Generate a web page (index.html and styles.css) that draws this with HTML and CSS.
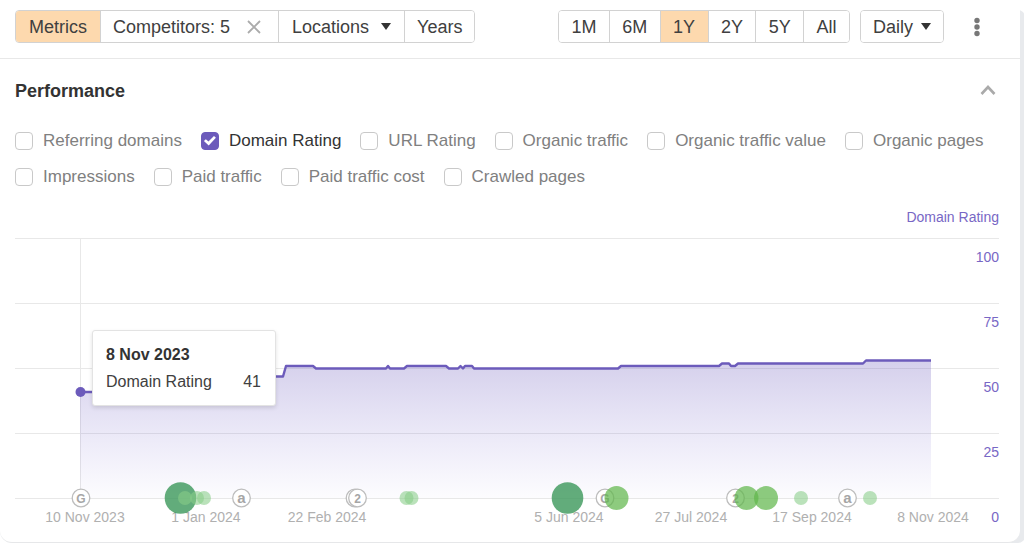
FILE: index.html
```html
<!DOCTYPE html>
<html lang="en">
<head>
<meta charset="utf-8">
<title>Performance</title>
<link rel="stylesheet" href="styles.css">
</head>
<body>
<main class="card">
  <header class="toolbar">
    <div class="group">
      <button class="seg seg-active" type="button">Metrics</button>
      <div class="seg seg-split">
        <button class="plain" type="button">Competitors: 5</button>
        <button class="plain close" type="button" aria-label="Clear competitors">
          <svg width="14" height="14" viewBox="0 0 14 14"><path d="M1 1L13 13M13 1L1 13" stroke="#ababab" stroke-width="1.8" fill="none"/></svg>
        </button>
      </div>
      <div class="seg seg-select locations">
        <select aria-label="Locations"><option>Locations</option></select>
        <svg class="caret" width="10" height="7" viewBox="0 0 10 7"><path d="M0 0H10L5 7Z" fill="#333"/></svg>
      </div>
      <button class="seg years" type="button">Years</button>
    </div>
    <div class="right">
      <div class="group ranges">
        <button class="seg" type="button">1M</button>
        <button class="seg" type="button">6M</button>
        <button class="seg seg-active" type="button">1Y</button>
        <button class="seg" type="button">2Y</button>
        <button class="seg" type="button">5Y</button>
        <button class="seg" type="button">All</button>
      </div>
      <div class="group">
        <div class="seg seg-select daily">
          <select aria-label="Interval"><option>Daily</option></select>
          <svg class="caret" width="10" height="7" viewBox="0 0 10 7"><path d="M0 0H10L5 7Z" fill="#333"/></svg>
        </div>
      </div>
      <button class="plain more" type="button" aria-label="More options">
        <svg width="6" height="20" viewBox="0 0 6 20" fill="#777"><circle cx="3" cy="3.5" r="2.7"/><circle cx="3" cy="10" r="2.7"/><circle cx="3" cy="16.500" r="2.7"/></svg>
      </button>
    </div>
  </header>

  <section class="performance">
    <div class="heading">
      <h2>Performance</h2>
      <button class="plain" type="button" aria-label="Collapse">
        <svg width="16" height="14" viewBox="0 0 16 14"><path d="M1.500 10L8 3L14.500 10" stroke="#aaa" stroke-width="2.600" fill="none"/></svg>
      </button>
    </div>

    <div class="checks">
      <label><input type="checkbox">Referring domains</label>
      <label><input type="checkbox" checked>Domain Rating</label>
      <label><input type="checkbox">URL Rating</label>
      <label><input type="checkbox">Organic traffic</label>
      <label><input type="checkbox">Organic traffic value</label>
      <label><input type="checkbox">Organic pages</label>
      <label><input type="checkbox">Impressions</label>
      <label><input type="checkbox">Paid traffic</label>
      <label><input type="checkbox">Paid traffic cost</label>
      <label><input type="checkbox">Crawled pages</label>
    </div>

    <div class="chart">
      <svg class="plot" viewBox="15 205 984 325" role="img" aria-label="Domain Rating over time">
        <defs>
          <linearGradient id="area" gradientUnits="userSpaceOnUse" x1="0" y1="360" x2="0" y2="498">
            <stop offset="0" stop-color="#6c5bbb" stop-opacity=".29"/>
            <stop offset="1" stop-color="#7f70d8" stop-opacity=".02"/>
          </linearGradient>
        </defs>
        <path class="grid" d="M15 238.500H999M15 303.500H999M15 368.500H999M15 433.500H999M15 498.500H999M80.500 238V498"/>
        <path fill="url(#area)" d="M80 392H92V377H283L286 366H313L316 368.500H386L388 366L390 368.500H404L407 366H446L449 368.500H458L460.500 366L463 368.500L465 366H472L474 368.500H618L621 366H719L722 363.500H729L731 366H735L738 363.500H863L866 360.500H931V498H80Z"/>
        <path class="line" d="M80 392H100M270 376.500H283L286 366H313L316 368.500H386L388 366L390 368.500H404L407 366H446L449 368.500H458L460.500 366L463 368.500L465 366H472L474 368.500H618L621 366H719L722 363.500H729L731 366H735L738 363.500H863L866 360.500H931"/>
        <circle cx="80.500" cy="392" r="5" fill="#6c5bbb"/>

        <g class="scale" text-anchor="end">
          <text x="999" y="222">Domain Rating</text>
          <text x="999" y="262">100</text>
          <text x="999" y="327">75</text>
          <text x="999" y="392">50</text>
          <text x="999" y="457">25</text>
          <text x="999" y="522">0</text>
        </g>
        <g class="dates" text-anchor="middle">
          <text x="85" y="522">10 Nov 2023</text>
          <text x="206" y="522">1 Jan 2024</text>
          <text x="327" y="522">22 Feb 2024</text>
          <text x="569" y="522">5 Jun 2024</text>
          <text x="691" y="522">27 Jul 2024</text>
          <text x="812" y="522">17 Sep 2024</text>
          <text x="933" y="522">8 Nov 2024</text>
        </g>

        <g class="badge" text-anchor="middle">
          <circle cx="81" cy="498" r="8.800"/><text x="81" y="502.500">G</text>
          <circle cx="241.500" cy="498" r="8.800"/><text class="a" x="241.500" y="502.500">a</text>
          <circle cx="355" cy="498" r="8.800"/>
          <circle cx="357.500" cy="498" r="8.800"/><text x="357.500" y="502.500">2</text>
          <circle cx="605" cy="498" r="8.800"/><text x="605" y="502.500">G</text>
          <circle cx="735.500" cy="498" r="8.800"/><text x="735.500" y="502.500">2</text>
          <circle cx="847.500" cy="498" r="8.800"/><text class="a" x="847.500" y="502.500">a</text>
        </g>

        <g fill="#3f9a5e" fill-opacity=".82">
          <circle cx="180.500" cy="498" r="15.800"/>
          <circle cx="567.500" cy="498" r="15.800"/>
        </g>
        <g fill="#61b74c" fill-opacity=".72">
          <circle cx="616.500" cy="498" r="12"/>
          <circle cx="746.500" cy="498" r="12"/>
          <circle cx="766" cy="498" r="12"/>
        </g>
        <g fill="#88cd88" fill-opacity=".58">
          <circle cx="185" cy="498" r="7"/>
          <circle cx="197" cy="498" r="7"/>
          <circle cx="204" cy="498" r="7"/>
          <circle cx="406.500" cy="498" r="7"/>
          <circle cx="411.500" cy="498" r="7"/>
          <circle cx="801" cy="498" r="7"/>
          <circle cx="870" cy="498" r="7"/>
        </g>
      </svg>
      <div class="tooltip">
        <strong>8 Nov 2023</strong>
        <div class="tip-row"><span>Domain Rating</span><span>41</span></div>
      </div>
    </div>
  </section>
</main>
</body>
</html>
```
FILE: styles.css
```css
* { box-sizing: border-box; }

body {
  margin: 0;
  background: #fff;
  color: #404040;
  font: 18px/24px "Liberation Sans", Arial, sans-serif;
}

.card {
  margin-right: 4px;
  background: #fff;
  border-bottom: 1px solid #e6e7e9;
  border-radius: 0 12px 12px 12px;
  box-shadow: 10px 5px 0 -5px #e8eaed;
}

.toolbar {
  display: flex;
  justify-content: space-between;
  padding: 10px 36px 15px 15px;
  border-bottom: 1px solid #e8e8e8;
}

.right { display: flex; gap: 10px; }

.group {
  display: flex;
  height: 33px;
  border: 1px solid #d2d2d2;
  border-radius: 4px;
  overflow: hidden;
}

.seg {
  margin: 0;
  padding: 0 13px;
  border: 0;
  background: #fff;
  color: #404040;
  font: inherit;
  white-space: nowrap;
}

.seg + .seg { border-left: 1px solid #d2d2d2; }
.group .seg-active { background: #fdd9ae; }
.ranges { width: 292px; }
.ranges .seg { flex: auto; padding: 0 12px; }

.seg-split {
  display: flex;
  align-items: center;
  gap: 17px;
  padding: 0 17px 0 12px;
}

.plain {
  padding: 0;
  border: 0;
  background: none;
  color: inherit;
  font: inherit;
}

.plain svg { display: block; }

.seg-select {
  display: flex;
  align-items: center;
  gap: 11px;
}

.seg-select select {
  appearance: none;
  padding: 0;
  border: 0;
  background: none;
  color: inherit;
  font: inherit;
}

.years { padding: 0 12px; }

.daily {
  gap: 7px;
  padding: 0 12px;
}

.more {
  display: flex;
  align-items: center;
  padding: 0 4px 0 20px;
}

.performance { padding: 0 21px 12px 15px; }

.heading {
  display: flex;
  justify-content: space-between;
  align-items: center;
  padding: 20px 3px 0 0;
}

h2 {
  margin: 0;
  color: #333;
  font-size: 18px;
  line-height: 24px;
}

.checks {
  display: flex;
  flex-wrap: wrap;
  column-gap: 19px;
  padding-top: 20px;
  margin-right: -16px;
  font-size: 17px;
  line-height: 36px;
}

.checks label {
  display: flex;
  align-items: center;
  gap: 10px;
  color: #808080;
}

.checks label:has(:checked) { color: #333; }

.checks input {
  appearance: none;
  width: 18px;
  height: 18px;
  margin: 0;
  border: 1px solid #c9c9c9;
  border-radius: 4px;
  background: #fff;
}

.checks input:checked {
  border-color: #6c5bbb;
  background: #6c5bbb;
}

.checks input:checked::before {
  content: "";
  display: block;
  width: 12px;
  height: 10px;
  margin: 3px 2px;
  background: #fff;
  clip-path: polygon(0 50%, 16% 32%, 38% 55%, 84% 0, 100% 18%, 40% 95%);
}

.chart {
  position: relative;
  padding-top: 10px;
}

.plot {
  display: block;
  width: 100%;
  font-size: 14px;
}

.grid { fill: none; stroke: #e8e8e8; }
.line { fill: none; stroke: #6c5bbb; stroke-width: 2.4; stroke-linejoin: round; }
.scale { fill: #7867c5; }
.dates { fill: #b0b0b0; }
.badge circle { fill: #fff; stroke: #bdbdbd; stroke-width: 1.3; }
.badge text { fill: #a6a6a6; font-size: 12px; font-weight: bold; }
.badge .a { font-size: 15px; }

.tooltip {
  position: absolute;
  top: 135px;
  left: 77px;
  width: 184px;
  padding: 10px 14px 10px 13px;
  border: 1px solid #e3e3e3;
  border-radius: 3px;
  background: #fff;
  box-shadow: 0 2px 4px rgba(0, 0, 0, .12);
  font-size: 16px;
  line-height: 27px;
}

.tooltip strong { color: #333; }
.tip-row { display: flex; justify-content: space-between; }
```
